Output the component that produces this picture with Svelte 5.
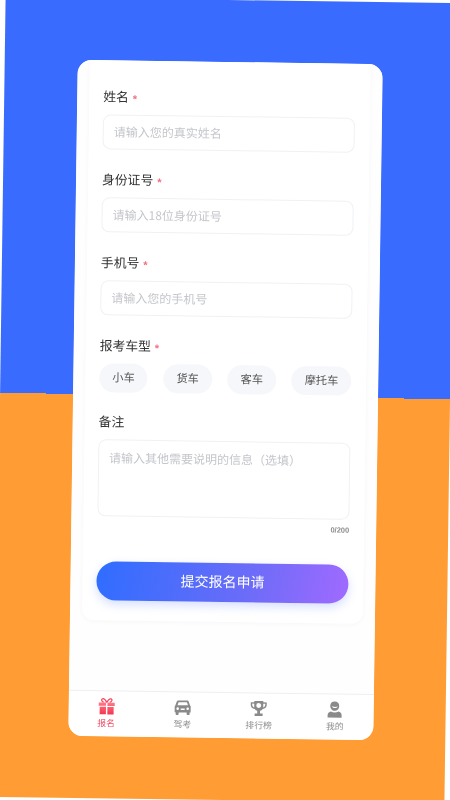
<script>
  const carTypes = ['小车', '货车', '客车', '摩托车'];
</script>

<div class="stage">
  <div class="tilt">
    <div class="card">
      <div class="scroll">
        <form class="panel" onsubmit={(e) => e.preventDefault()}>
          <div class="field">
            <div class="label">姓名<span class="req">*</span></div>
            <input placeholder="请输入您的真实姓名" />
          </div>
          <div class="field">
            <div class="label">身份证号<span class="req">*</span></div>
            <input placeholder="请输入18位身份证号" />
          </div>
          <div class="field">
            <div class="label">手机号<span class="req">*</span></div>
            <input placeholder="请输入您的手机号" />
          </div>
          <div class="field">
            <div class="label">报考车型<span class="req">*</span></div>
            <div class="chips">
              {#each carTypes as type}
                <button type="button" class="chip">{type}</button>
              {/each}
            </div>
          </div>
          <div class="field">
            <div class="label">备注</div>
            <textarea placeholder="请输入其他需要说明的信息（选填）"></textarea>
            <div class="count">0/200</div>
          </div>
          <button type="submit" class="submit">提交报名申请</button>
        </form>
      </div>

      <nav class="tabs">
        <div class="tab active">
          <svg viewBox="0 0 18 18" width="18" height="18">
            <defs>
              <linearGradient id="gift" x1="0" y1="0" x2="0" y2="1">
                <stop offset="0" stop-color="#ff7a88" />
                <stop offset="1" stop-color="#f5354f" />
              </linearGradient>
            </defs>
            <path d="M9 5C7.500 2.200 5.800 1 4.600 1.500 3.300 2 3.600 4.200 6 5M9 5c1.500-2.800 3.200-4 4.400-3.500 1.300.5 1 2.700-1.400 3.500" fill="none" stroke="#f9475e" stroke-width="1.300" />
            <path d="M1 5.200h7.300v3.300H1zM9.700 5.200H17v3.300H9.700zM2 9.500h6.300V17H2zM9.700 9.500H16V17H9.700z" fill="url(#gift)" />
          </svg>
          <span>报名</span>
        </div>
        <div class="tab">
          <svg viewBox="0 0 18 18" width="18" height="18">
            <path fill-rule="evenodd" d="M4.700 2h8.600c.8 0 1.400.5 1.700 1.200L16.300 7l.7.800V14h-1v1.600a1 1 0 0 1-1 1h-1a1 1 0 0 1-1-1V14H5v1.600a1 1 0 0 1-1 1H3a1 1 0 0 1-1-1V14H1V7.800L1.700 7 3 3.200C3.300 2.500 3.900 2 4.700 2zM4.800 3.800 3.800 6.800h10.400l-1-3zM4 9a1.300 1.300 0 1 0 0 2.600A1.300 1.300 0 0 0 4 9zm10 0a1.300 1.300 0 1 0 0 2.600A1.300 1.300 0 0 0 14 9zM7 10v1.500h4V10z" fill="#8a8a8a" />
          </svg>
          <span>驾考</span>
        </div>
        <div class="tab">
          <svg viewBox="0 0 18 18" width="18" height="18">
            <path fill-rule="evenodd" d="M4.500 1.500h9v1.300H17V5.500c0 2.200-1.600 3.700-4 4-.6 1-1.500 1.600-2.600 1.800V14h2.600v2.500H5V14h2.600v-2.700C6.500 11.100 5.600 10.500 5 9.500c-2.400-.3-4-1.800-4-4V2.800h3.500zM2.500 4.200v1.300c0 1.200.8 2.100 2 2.500V4.200zm13 0h-2V8c1.200-.4 2-1.300 2-2.500zM9 3.500a2.500 2.500 0 1 0 0 5 2.500 2.500 0 0 0 0-5z" fill="#8a8a8a" />
          </svg>
          <span>排行榜</span>
        </div>
        <div class="tab">
          <svg viewBox="0 0 18 18" width="18" height="18">
            <path fill-rule="evenodd" d="M9 1c2.700 0 4.500 1.600 4.500 4.300 0 2.800-1.900 5-4.500 5s-4.500-2.200-4.500-5C4.500 2.600 6.300 1 9 1zM6 5.800c.8 2.300 5.200 2.300 6 0-1.300.7-4.700.7-6 0z" fill="#8a8a8a" />
            <path d="M5.300 11c1 .7 2.300 1 3.700 1s2.700-.3 3.700-1c1.900.5 3.300 1.700 3.300 3.500V17H2v-2.500C2 12.700 3.400 11.500 5.300 11z" fill="#8a8a8a" />
          </svg>
          <span>我的</span>
        </div>
      </nav>
    </div>
  </div>
</div>

<style>
  :global(body) {
    margin: 0;
    background: #fff;
  }
  .stage {
    width: 450px;
    height: 800px;
    overflow: hidden;
    background: #fff;
    font-family: "Noto Sans CJK SC", "Noto Sans", sans-serif;
    filter: blur(0.5px);
  }
  .tilt {
    width: 450px;
    height: 800px;
    display: flex;
    align-items: center;
    justify-content: center;
    background: linear-gradient(#3a6bff 396px, #ff9c33 396px);
    transform: rotate(0.8deg);
  }
  .card {
    width: 305px;
    height: 676px;
    display: flex;
    flex-direction: column;
    background: #fff;
    border-radius: 14px;
    overflow: hidden;
  }
  .scroll {
    flex: 1;
    min-height: 0;
    background: #fefefe;
  }
  .panel {
    margin: 0 12px;
    height: 560px;
    box-sizing: border-box;
    padding: 26px 14.5px 0;
    background: #fff;
    border-radius: 0 0 12px 12px;
    box-shadow: 0 1px 5px rgba(30, 40, 80, 0.035);
  }
  .field {
    margin-bottom: 20px;
  }
  .label {
    height: 20px;
    line-height: 20px;
    margin-bottom: 8px;
    font-size: 12.8px;
    color: #333;
  }
  .req {
    margin-left: 4px;
    font-family: "Liberation Sans", sans-serif;
    font-size: 11px;
    font-weight: bold;
    vertical-align: -1px;
    color: #f27080;
  }
  input,
  textarea {
    display: block;
    width: 100%;
    box-sizing: border-box;
    border: 1px solid #eff1f4;
    border-radius: 8px;
    background: #fff;
    font-family: inherit;
    font-size: 12px;
    color: #333;
    outline: none;
  }
  input {
    height: 35px;
    padding: 0 10px 3px;
  }
  textarea {
    height: 77px;
    padding: 8px 10px;
    line-height: 18px;
    resize: none;
  }
  input::placeholder,
  textarea::placeholder {
    color: #c4c6cb;
  }
  .chips {
    display: flex;
    justify-content: space-between;
    margin-top: 7px;
    margin-bottom: -1px;
  }
  .chip {
    height: 29px;
    padding: 0 13px 3px;
    border: none;
    border-radius: 15px;
    background: #f6f7fa;
    font-family: inherit;
    font-size: 11.2px;
    color: #555;
  }
  .count {
    margin-top: 6px;
    text-align: right;
    font-family: "Liberation Sans", sans-serif;
    font-size: 7.5px;
    font-weight: bold;
    line-height: 10px;
    color: #8c8c8c;
  }
  .submit {
    display: block;
    width: 100%;
    height: 39px;
    margin-top: 29px;
    padding-bottom: 4px;
    border: none;
    border-radius: 20px;
    background: linear-gradient(100deg, #2f6dff 0%, #6b6cf8 60%, #a06aff 100%);
    box-shadow: 0 4px 10px rgba(70, 110, 255, 0.22);
    font-family: inherit;
    font-size: 14px;
    color: #fff;
  }
  .tabs {
    height: 46px;
    flex: none;
    display: flex;
    box-sizing: border-box;
    border-top: 1px solid #eeeff2;
    background: #fff;
  }
  .tab {
    flex: 1;
    display: flex;
    flex-direction: column;
    align-items: center;
    padding-top: 6px;
    font-size: 8.8px;
    line-height: 12px;
    color: #8f8f8f;
  }
  .tab span {
    margin-top: 2px;
  }
  .tab.active {
    color: #ef4c63;
  }
</style>
